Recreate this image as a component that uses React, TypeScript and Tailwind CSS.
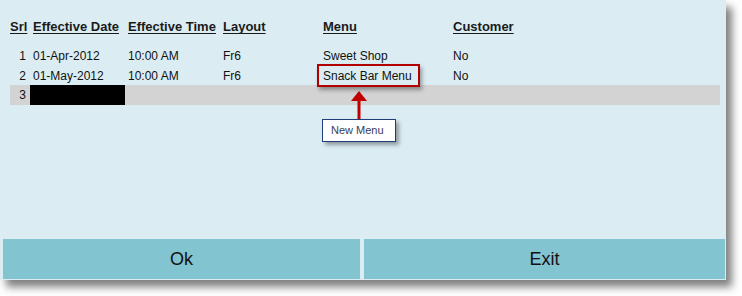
const rows = [
  { srl: '1', date: '01-Apr-2012', time: '10:00 AM', layout: 'Fr6', menu: 'Sweet Shop', customer: 'No' },
  { srl: '2', date: '01-May-2012', time: '10:00 AM', layout: 'Fr6', menu: 'Snack Bar Menu', customer: 'No' },
]

const font = { fontFamily: '"Liberation Sans", Arial, sans-serif' }

export default function App() {
  return (
    <div className="w-[742px] h-[296px] bg-white overflow-hidden" style={font}>
      <div className="relative w-[726px] h-[280px] bg-[#dbedf3] flex flex-col shadow-[6px_7px_8px_rgba(0,0,0,0.5)]">
        {/* Grid */}
        <div className="flex-1 pt-[17px] pl-[10px] pr-[6px]">
          <div className="flex h-[20px] items-center text-[13px] font-bold text-[#1a1a1a]">
            <span className="w-[23px] underline underline-offset-2">Srl</span>
            <span className="w-[95px] underline underline-offset-2">Effective Date</span>
            <span className="w-[95px] underline underline-offset-2">Effective Time</span>
            <span className="w-[100px] underline underline-offset-2">Layout</span>
            <span className="w-[130px] underline underline-offset-2">Menu</span>
            <span className="underline underline-offset-2">Customer</span>
          </div>
          <div className="mt-[8px] text-[12px] text-[#111]">
            {rows.map((r) => (
              <div key={r.srl} className="flex h-[20px] items-center pt-px">
                <span className="w-[23px] pr-[7px] text-right">{r.srl}</span>
                <span className="w-[95px]">{r.date}</span>
                <span className="w-[95px]">{r.time}</span>
                <span className="w-[100px]">{r.layout}</span>
                <span className="w-[130px]">{r.menu}</span>
                <span>{r.customer}</span>
              </div>
            ))}
            <div className="flex h-[20px] items-center bg-[#d3d3d3]">
              <span className="w-[20px] pr-[4px] text-right">3</span>
              <span className="w-[95px] h-[20px] bg-black" />
            </div>
          </div>
        </div>

        {/* Callout */}
        <div className="absolute left-[317px] top-[64px] w-[103px] h-[23px] border-2 border-[#b20000] shadow-[2px_3px_4px_rgba(0,0,0,0.35)]" />
        <svg className="absolute left-[351px] top-[91px]" width="16" height="28" viewBox="0 0 16 28">
          <polygon points="8,0 16,10 0,10" fill="#c00000" />
          <rect x="6.5" y="9" width="3" height="19" fill="#c00000" />
        </svg>
        <div className="absolute left-[322px] top-[119px] w-[74px] h-[23px] bg-white border border-[#1f3e7a] flex items-center pl-[8px] text-[11px] text-[#3a3a5a] shadow-[3px_3px_4px_rgba(0,0,0,0.35)]">
          New Menu
        </div>

        {/* Buttons */}
        <div className="flex gap-[4px] pl-[3px] pr-px pb-px">
          <button className="w-[357px] h-[40px] bg-[#82c4d0] text-[18px] text-[#111]">Ok</button>
          <button className="flex-1 h-[40px] bg-[#82c4d0] text-[18px] text-[#111]">Exit</button>
        </div>
      </div>
    </div>
  )
}
